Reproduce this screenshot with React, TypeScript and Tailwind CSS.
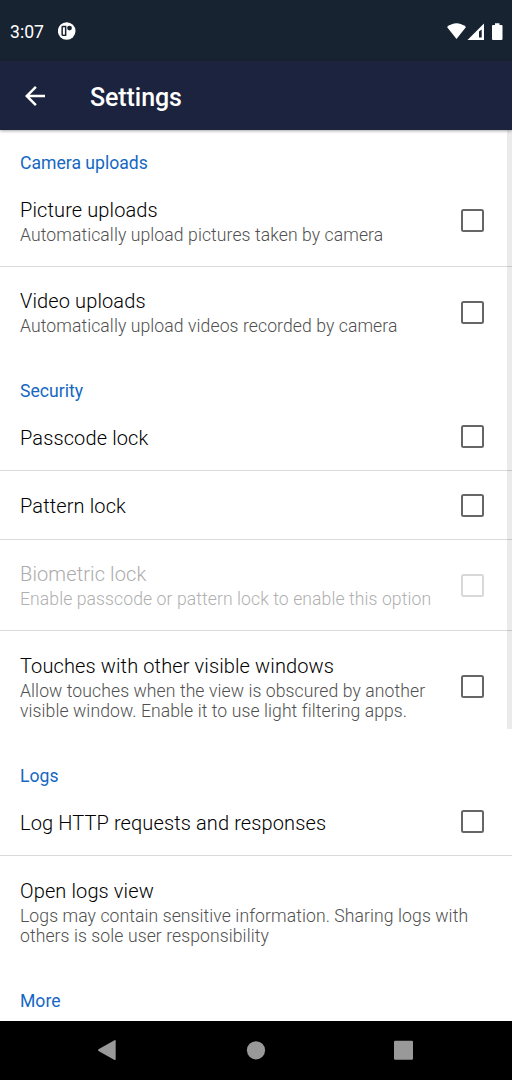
type RowProps = {
  title: string;
  lines?: string[];
  height: string;
  checkbox?: boolean;
  disabled?: boolean;
  divider?: boolean;
};

function Category({ title }: { title: string }) {
  return (
    <h2 className="h-[45px] shrink-0 px-5 pt-[21px] text-[17.6px] leading-6 font-[450] text-[#1568c2]">
      {title}
    </h2>
  );
}

function Row({ title, lines, height, checkbox = true, disabled, divider }: RowProps) {
  return (
    <div
      className={`${height} flex shrink-0 items-center justify-between border-b pr-7 pl-5 ${divider ? 'border-[#dadada]' : 'border-transparent'}`}
    >
      <div className={`whitespace-nowrap ${lines ? 'pt-px' : 'pt-[2px]'}`}>
        <div className={`text-[20px] leading-[26px] font-light tracking-[0.12px] ${disabled ? 'text-[#acacac]' : 'text-black'}`}>
          {title}
        </div>
        {lines && (
          <div className={`pt-[2px] text-[17.6px] leading-[20.5px] font-light tracking-[0.08px] ${disabled ? 'text-[#b0b0b0]' : 'text-[#505050]'}`}>
            {lines.map((line) => (
              <p key={line}>{line}</p>
            ))}
          </div>
        )}
      </div>
      {checkbox && (
        <span
          role="checkbox"
          aria-checked="false"
          aria-label={title}
          className={`size-[23px] shrink-0 rounded-[2.5px] border-2 ${disabled ? 'border-[#d8d8d8]' : 'border-[#666666]'}`}
        />
      )}
    </div>
  );
}

export default function App() {
  return (
    <div className="relative flex h-[1080px] w-[512px] flex-col overflow-hidden bg-white font-['Roboto',sans-serif]">
      <div className="flex h-[61px] shrink-0 items-center bg-[#182332] pl-[10px] text-white">
        <span className="pt-[2px] text-[17.6px] leading-6">3:07</span>
        <svg className="ml-[14px]" width="18" height="18" viewBox="0 0 18 18">
          <circle cx="8.700" cy="9" r="8.800" fill="#fff" />
          <path d="M8.400 3.800V14H5Q3.400 14 3.400 12.700V5.100Q3.400 3.800 5 3.800Z" fill="#182332" />
          <path d="M4.900 5.300H6.900V12.600H4.900Z" fill="#fff" />
          <circle cx="11.500" cy="6.100" r="2.400" fill="#182332" />
        </svg>
        <svg className="ml-auto" width="66" height="20" viewBox="446 20 66 20" fill="#fff">
          <path d="M447 26Q456.500 18.500 466 26L456.500 38Z" />
          <path fillRule="evenodd" d="M467.500 39L484 22.500V39ZM479 30.500V36.500H481.700V28.500Z" />
          <path d="M495 22.300H499.500V24H501.500Q502.500 24 502.500 25V38Q502.500 39 501.500 39H493Q492 39 492 38V25Q492 24 493 24H495Z" />
        </svg>
      </div>
      <header className="relative z-10 flex h-[69px] shrink-0 items-center bg-[#1c233f] pl-[25px] text-white shadow-[0_1px_3px_rgba(0,0,0,0.35)]">
        <svg width="20" height="20" viewBox="4 4 16 16" fill="#fff">
          <path d="M20 11H7.830l5.590-5.590L12 4l-8 8 8 8 1.410-1.410L7.830 13H20v-2z" />
        </svg>
        <h1 className="ml-[45px] pt-[4px] text-[25px] leading-8 font-medium tracking-[-0.08px]">Settings</h1>
      </header>
      <main className="relative flex h-[891px] shrink-0 flex-col overflow-hidden">
        <Category title="Camera uploads" />
        <Row title="Picture uploads" lines={['Automatically upload pictures taken by camera']} height="h-[92px]" divider />
        <Row title="Video uploads" lines={['Automatically upload videos recorded by camera']} height="h-[91px]" />
        <Category title="Security" />
        <Row title="Passcode lock" height="h-[68px]" divider />
        <Row title="Pattern lock" height="h-[69px]" divider />
        <Row title="Biometric lock" lines={['Enable passcode or pattern lock to enable this option']} height="h-[91px]" disabled divider />
        <Row
          title="Touches with other visible windows"
          lines={['Allow touches when the view is obscured by another', 'visible window. Enable it to use light filtering apps.']}
          height="h-[112px]"
        />
        <Category title="Logs" />
        <Row title="Log HTTP requests and responses" height="h-[68px]" divider />
        <Row
          title="Open logs view"
          lines={['Logs may contain sensitive information. Sharing logs with', 'others is sole user responsibility']}
          height="h-[112px]"
          checkbox={false}
        />
        <Category title="More" />
        <div className="absolute top-0 right-0 h-[599px] w-[5px] bg-black/8" />
      </main>
      <nav className="flex h-[59px] shrink-0 bg-black">
        <svg width="512" height="59" viewBox="0 1021 512 59" fill="#999">
          <path d="M98.500 1049.200L114.500 1040.200Q115.700 1039.800 115.700 1041V1059Q115.700 1060.400 114.500 1059.900L98.500 1050.900Q97.500 1050 98.500 1049.200Z" />
          <circle cx="256" cy="1050.300" r="9.100" />
          <rect x="394" y="1040.800" width="19" height="19" rx="1.200" />
        </svg>
      </nav>
    </div>
  );
}
